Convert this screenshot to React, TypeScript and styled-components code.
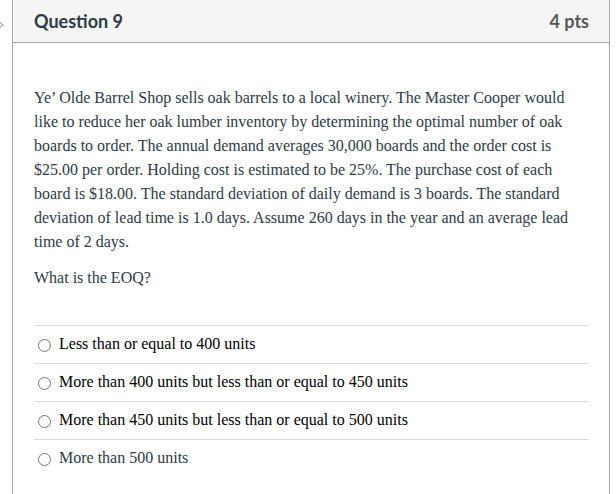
import React from "react";
import styled, { createGlobalStyle } from "styled-components";

const Global = createGlobalStyle`
  html, body { margin: 0; padding: 0; background: #fff; }
  body { width: 616px; height: 494px; overflow: hidden; }
`;

const Page = styled.div`
  display: flex;
  align-items: stretch;
  width: 616px;
  height: 494px;
  overflow: hidden;
`;

const Gutter = styled.div`
  width: 12px;
  flex: none;
  padding-top: 16px;
  overflow: hidden;
`;

const Card = styled.div`
  width: 596px;
  flex: none;
  border-left: 1px solid #a9a9a9;
  border-right: 1px solid #a9a9a9;
  display: flex;
  flex-direction: column;
`;

const Header = styled.div`
  height: 43px;
  box-sizing: border-box;
  background: #f5f5f5;
  border-bottom: 1px solid #a9a9a9;
  display: flex;
  align-items: center;
  justify-content: space-between;
  padding: 0 20px 1px 21px;
  font-family: Lato, "Liberation Sans", sans-serif;
  color: #2d3b45;
`;

const Title = styled.div`
  font-size: 18px;
  font-weight: 700;
`;

const Points = styled.div`
  font-size: 18px;
  font-weight: 700;
  color: #595959;
`;

const Body = styled.div`
  padding: 43px 20px 0 21px;
  font-family: "Liberation Serif", "Times New Roman", serif;
  font-size: 16px;
  line-height: 24px;
  color: #2d3b45;
`;

const Para = styled.p`
  margin: 0 0 12px 0;
  width: 540px;
`;

const Answers = styled.div`
  margin-top: 35px;
  display: flex;
  flex-direction: column;
`;

const Answer = styled.label<{ $muted?: boolean }>`
  height: 38px;
  box-sizing: border-box;
  border-top: 1px solid #dcdcdc;
  display: flex;
  align-items: center;
  gap: 8px;
  padding-left: 4px;
  padding-bottom: 2px;
  color: ${(p) => (p.$muted ? "#2d3b45" : "#000")};
  font-family: "Liberation Serif", "Times New Roman", serif;
  font-size: 16px;
`;

const Radio = styled.span`
  width: 13px;
  height: 13px;
  box-sizing: border-box;
  border: 1px solid #767676;
  border-radius: 50%;
  background: #fff;
  flex: none;
  margin-top: 3px;
`;

const options = [
  "Less than or equal to 400 units",
  "More than 400 units but less than or equal to 450 units",
  "More than 450 units but less than or equal to 500 units",
  "More than 500 units",
];

export default function App() {
  return (
    <>
      <Global />
      <Page>
        <Gutter>
          <svg width="12" height="10" viewBox="0 0 12 10">
            <path d="M-2 1 L3 5 L-2 9" fill="none" stroke="#8fb8de" strokeWidth="1.4" />
          </svg>
        </Gutter>
        <Card>
          <Header>
            <Title>Question 9</Title>
            <Points>4 pts</Points>
          </Header>
          <Body>
            <Para>
              Ye’ Olde Barrel Shop sells oak barrels to a local winery. The Master Cooper would
              like to reduce her oak lumber inventory by determining the optimal number of oak
              boards to order. The annual demand averages 30,000 boards and the order cost is
              $25.00 per order. Holding cost is estimated to be 25%. The purchase cost of each
              board is $18.00. The standard deviation of daily demand is 3 boards. The standard
              deviation of lead time is 1.0 days. Assume 260 days in the year and an average lead
              time of 2 days.
            </Para>
            <Para>What is the EOQ?</Para>
            <Answers>
              {options.map((o, i) => (
                <Answer key={o} $muted={i === options.length - 1}>
                  <Radio />
                  {o}
                </Answer>
              ))}
            </Answers>
          </Body>
        </Card>
      </Page>
    </>
  );
}
